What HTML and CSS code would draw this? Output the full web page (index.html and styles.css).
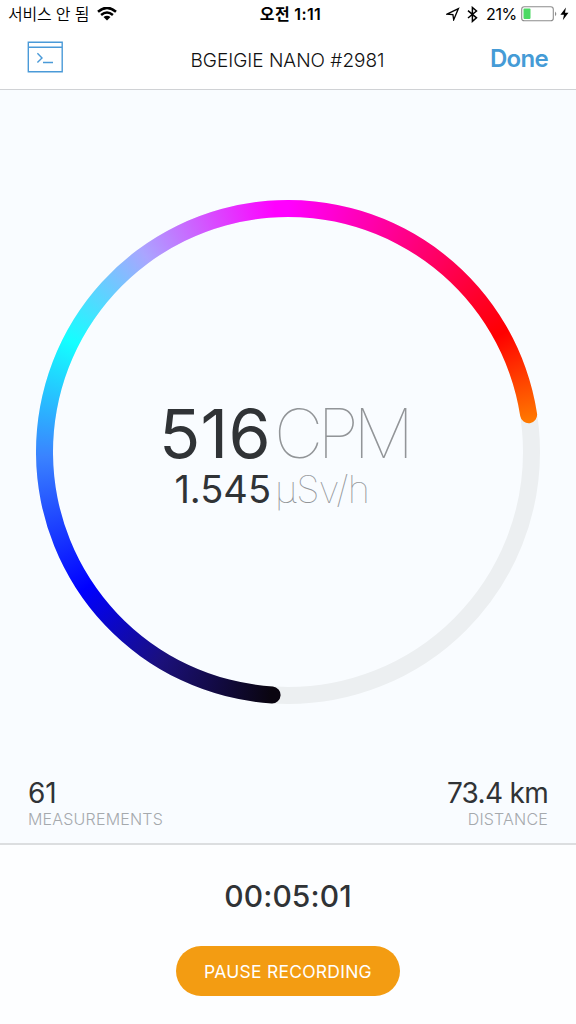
FILE: index.html
```html
<!DOCTYPE html>
<html lang="ko">
<head>
<meta charset="utf-8">
<title>bGeigie Nano</title>
<link rel="stylesheet" href="styles.css">
</head>
<body>
<header class="top">
  <div class="status">
    <div class="status-left">
      <span class="carrier">서비스 안 됨</span>
      <svg class="wifi" width="20" height="14" viewBox="0 0 20 14"><path d="M1 4.7Q10-3 19 4.7M4.1 8Q10 3 15.9 8" fill="none" stroke="#000" stroke-width="2.5"/><path d="M6.5 10.1Q10 7.4 13.5 10.1L10 13.6Z"/></svg>
    </div>
    <span class="clock">오전 1:11</span>
    <div class="status-right">
      <svg width="14" height="14" viewBox="0 0 14 14"><path d="M1 7.2 12.4 1.6 7.7 12.8 6.9 7.6Z" fill="none" stroke="#000" stroke-width="1.3"/></svg>
      <svg class="bluetooth" width="11" height="17" viewBox="0 0 11 17"><path d="M1 4.7 9.5 11.8 5.4 15.4V1.5L9.5 5 1 12" fill="none" stroke="#000" stroke-width="1.5"/></svg>
      <span class="percent">21%</span>
      <svg class="battery" width="37" height="16" viewBox="0 0 37 16"><rect x=".7" y=".7" width="31.6" height="14.1" rx="2.6" fill="#fff" stroke="#8d8d8d" stroke-width="1.1"/><rect x="2.5" y="2.6" width="7" height="10.3" rx=".8" fill="#4cd964"/><path d="M34 5.4q2.6 2.4 0 4.8z" fill="#8d8d8d"/></svg>
      <svg class="bolt" width="9" height="14" viewBox="0 0 9 14"><path d="M5.9.5.4 7.8H4L2.8 13.3 8.5 5.8H5Z"/></svg>
    </div>
  </div>
  <nav class="nav">
    <svg class="console" width="36" height="32" viewBox="0 0 36 32" fill="none" stroke="#4a9ad8" stroke-width="1.4"><path d="M1.3 1.2H35.2V30.7H1.3ZM1.3 6.3H35.2M10.4 12.2 15 17 10.4 21.5M16 21.5H26"/></svg>
    <h1 class="title">BGEIGIE NANO #2981</h1>
    <a class="done">Done</a>
  </nav>
</header>
<main class="dashboard">
  <div class="gauge">
    <div class="track"></div>
    <div class="progress"></div>
    <div class="readings">
      <span class="cpm">516</span><span class="cpm-unit">CPM</span>
      <span class="dose">1.545</span><span class="dose-unit">µSv/h</span>
    </div>
  </div>
  <div class="stats">
    <div><div class="value count">61</div><div class="label measurements">MEASUREMENTS</div></div>
    <div class="right"><div class="value distance">73.4 km</div><div class="label">DISTANCE</div></div>
  </div>
</main>
<footer class="controls">
  <div class="timer">00:05:01</div>
  <button class="pause">PAUSE RECORDING</button>
</footer>
</body>
</html>
```
FILE: styles.css
```css
* { box-sizing: border-box; }
body {
  margin: 0; width: 576px; height: 1024px; overflow: hidden;
  display: flex; flex-direction: column;
  font-family: Inter, "Noto Sans CJK KR", sans-serif;
  background: #fff; color: #303336;
}
svg { display: block; flex: none; }
.top { height: 90px; border-bottom: 1px solid #d0d2d5; background: #fff; }
.status { height: 28px; display: grid; grid-template-columns: 1fr auto 1fr; align-items: center; color: #000; font-size: 16px; line-height: 28px; }
.status-left { display: flex; align-items: center; gap: 8px; padding-left: 8px; }
.carrier { font-size: 16px; font-weight: 350; white-space: nowrap; letter-spacing: -0.2px; }
.clock { font-weight: 600; font-size: 16px; letter-spacing: 0.35px; padding-left: 5px; }
.status-right { display: flex; align-items: center; justify-content: flex-end; padding-right: 7px; }
.bluetooth { margin-left: 7px; }
.percent { margin-left: 8px; letter-spacing: -0.3px; }
.battery { margin-left: 4px; }
.bolt { margin-left: 2px; }
.nav { height: 61px; padding: 0 28px 0 27px; display: grid; grid-template-columns: 1fr auto 1fr; align-items: center; }
.console { margin-top: -3px; }
.title { margin: 3px 0 0; font-size: 19px; font-weight: 300; color: #111; letter-spacing: 0; white-space: nowrap; }
.done { justify-self: end; font-size: 24px; font-weight: 600; color: #459bd6; letter-spacing: -0.7px; }
.dashboard { height: 755px; background: #f9fcff; border-bottom: 2px solid #dcdee0; padding-top: 110px; }
.gauge { width: 504px; height: 504px; margin: 0 auto; display: grid; }
.gauge > * { grid-area: 1 / 1; }
.track { border: 17px solid #eceff1; border-radius: 50%; }
.progress {
  background: conic-gradient(#ff00ff 0deg, #ff0000 61deg, #ff7f00 84deg, #ff7f00 130deg, #0a0510 180deg, #0a0510 184deg, #1b107a 211deg, #0000ff 236deg, #3a83ff 269deg, #14ffff 297deg, #aaa5ff 324deg, #ff00ff 357deg);
  clip-path: path("M235.74 503.47A252 252 0 1 1 501.03 213.44A8.5 8.5 0 0 1 484.23 216.04A235 235 0 1 0 236.84 486.51A8.5 8.5 0 0 1 235.74 503.47Z");
}
.readings { display: grid; grid-template-columns: 235px 1fr; grid-template-rows: 71px 42px; column-gap: 4px; padding-top: 197px; white-space: nowrap; }
.cpm, .dose { text-align: right; }
.cpm, .cpm-unit { font-size: 68px; line-height: 73px; }
.cpm { letter-spacing: 0.3px; }
.cpm-unit, .dose-unit { color: #929598; font-weight: 100; }
.cpm-unit { letter-spacing: -5.6px; margin-left: -1px; }
.dose, .dose-unit { font-size: 38px; line-height: 42px; }
.dose-unit { letter-spacing: -0.9px; }
.stats { display: flex; justify-content: space-between; padding: 74px 28px 0; }
.right { text-align: right; }
.value { font-size: 28px; line-height: 30px; letter-spacing: -0.7px; }
.count { letter-spacing: 0; }
.label { font-size: 16px; line-height: 22px; font-weight: 300; color: #a5a9ad; letter-spacing: 0.2px; }
.controls { flex: 1; display: flex; flex-direction: column; align-items: center; background: #fdfeff; padding-top: 33px; }
.timer { font-size: 30px; line-height: 36px; font-weight: 500; letter-spacing: 0.1px; }
.pause { margin-top: 32px; width: 224px; height: 50px; padding: 0; border: 0; border-radius: 25px; background: #f39c12; color: #fff; font: 400 17.5px Inter, sans-serif; letter-spacing: 0.25px; }
```
